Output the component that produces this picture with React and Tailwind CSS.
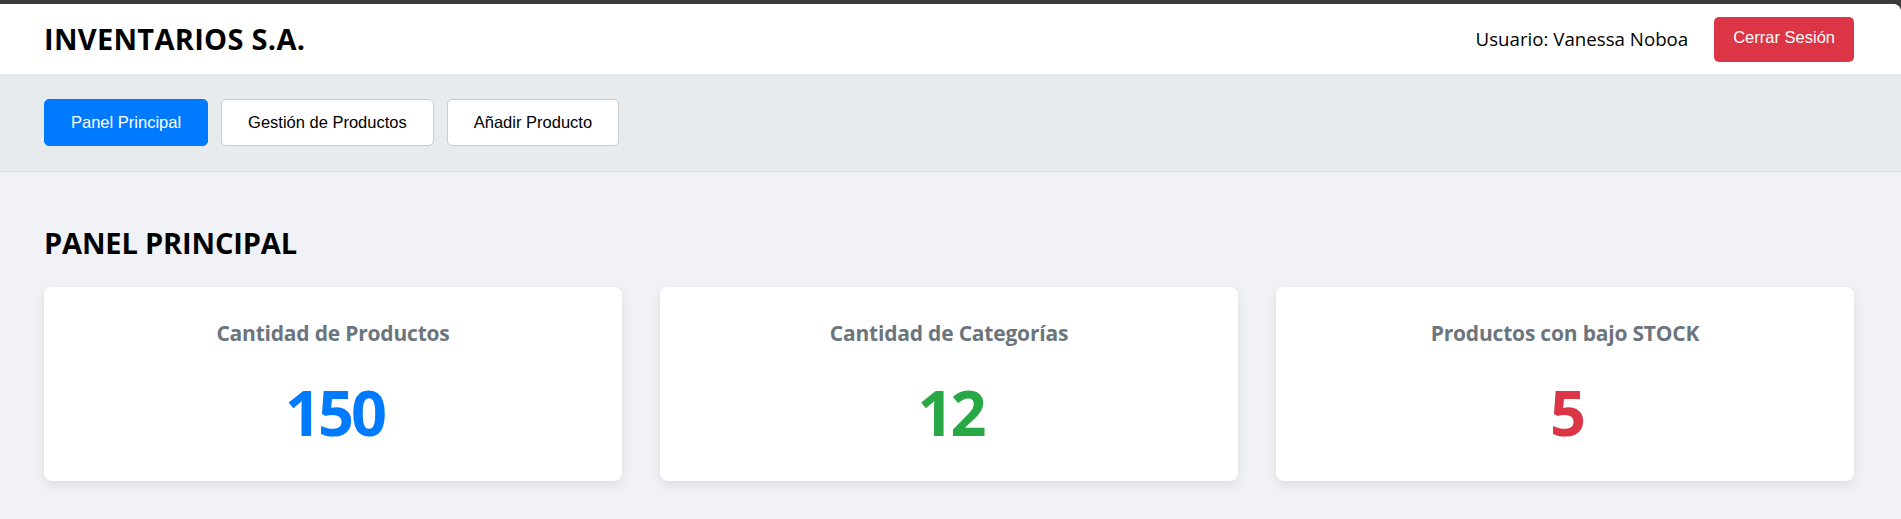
export default function App() {
  const stats = [
    { label: "Cantidad de Productos", value: "150", color: "text-[#007bff]" },
    { label: "Cantidad de Categorías", value: "12", color: "text-[#28a745]" },
    { label: "Productos con bajo STOCK", value: "5", color: "text-[#dc3545]" },
  ];

  return (
    <div className="min-h-[519px] bg-[#3b3b3b] pt-[4px] font-['Open_Sans',sans-serif] text-black">
      <div className="min-h-[515px] rounded-tr-[8px] bg-[#f0f2f5] overflow-hidden">
        {/* Header */}
        <header className="flex h-[70px] items-center justify-between bg-white pl-[44px] pr-[47px]">
          <h1 className="text-[29px] font-bold leading-[36px] tracking-[0.3px]">INVENTARIOS S.A.</h1>
          <div className="flex items-center gap-[26px]">
            <span className="text-[18.7px] leading-[24px]">Usuario: Vanessa Noboa</span>
            <button className="h-[45px] rounded-[5px] bg-[#dc3545] px-[19px] pb-[4px] font-['Liberation_Sans',sans-serif] text-[16.5px] text-white">
              Cerrar Sesión
            </button>
          </div>
        </header>

        {/* Navegación */}
        <nav className="flex gap-[13px] border-b border-[#dde0e4] bg-[#e8ebee] py-[25px] pl-[44px] font-['Liberation_Sans',sans-serif] text-[16.5px]">
          <button className="flex h-[47px] items-center rounded-[5px] border border-[#007bff] bg-[#007bff] px-[26px] text-white">
            Panel Principal
          </button>
          <button className="flex h-[47px] items-center rounded-[5px] border border-[#cccccc] bg-white px-[26px] text-black">
            Gestión de Productos
          </button>
          <button className="flex h-[47px] items-center rounded-[5px] border border-[#cccccc] bg-white px-[26px] text-black">
            Añadir Producto
          </button>
        </nav>

        {/* Contenido */}
        <main className="pl-[44px] pr-[47px] pt-[53px]">
          <h2 className="mb-[26px] text-[29px] font-bold leading-[36px] tracking-[-0.15px]">PANEL PRINCIPAL</h2>
          <div className="grid grid-cols-3 gap-[38px]">
            {stats.map((s) => (
              <div
                key={s.label}
                className="flex h-[194px] flex-col items-center rounded-[8px] bg-white pt-[31px] text-center shadow-[0_4px_12px_rgba(0,0,0,0.09)]"
              >
                <h3 className="text-[21px] font-bold leading-[30px] tracking-[-0.2px] text-[#6c757d]">{s.label}</h3>
                <p className={`mt-[32px] pl-[3px] text-[63px] font-bold leading-[64px] tracking-[-3px] ${s.color}`}>
                  {s.value}
                </p>
              </div>
            ))}
          </div>
        </main>
      </div>
    </div>
  );
}
